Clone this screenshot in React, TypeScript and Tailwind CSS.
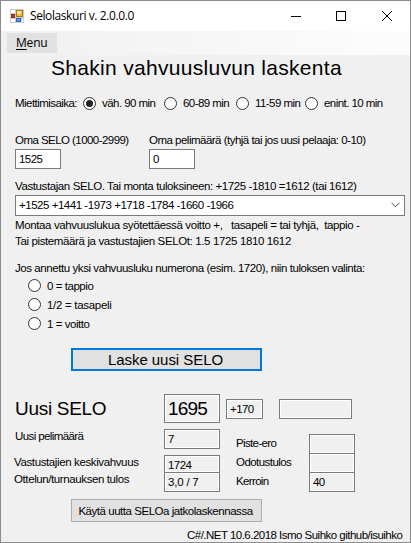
import type { ReactNode } from "react";

function Label({ className = "", children }: { className?: string; children: ReactNode }) {
  return <span className={`block whitespace-pre ${className}`}>{children}</span>;
}

function Radio({ checked = false }: { checked?: boolean }) {
  return (
    <span className="flex h-[13px] w-[13px] shrink-0 items-center justify-center rounded-full border border-[#333] bg-white">
      {checked && <span className="h-[7px] w-[7px] rounded-full bg-[#222]" />}
    </span>
  );
}

function Box({ className = "", children }: { className?: string; children?: ReactNode }) {
  return (
    <div className={`flex shrink-0 items-center whitespace-pre border border-[#7a7a7a] pl-[3px] ${className}`}>
      {children}
    </div>
  );
}

function ReadOnly({ className = "", children }: { className?: string; children?: ReactNode }) {
  return <Box className={`bg-[#f0f0f0] shadow-[inset_0_0_0_1px_#fff] ${className}`}>{children}</Box>;
}

function TitleBar() {
  return (
    <div className="flex h-[30px] shrink-0 items-center bg-white pl-[9px] font-['Open_Sans','Noto_Sans',sans-serif] text-[12px]">
      <svg width="14" height="14" viewBox="0 0 14 14" className="shrink-0">
        <rect width="14" height="14" fill="#c9cdd0" />
        <path d="M1 1h4v3H1zM1 10h4v3H1zM12 10h1v3h-1z" fill="#fff" />
        <rect x="6.5" y="1.5" width="6" height="6" fill="#f6bd32" stroke="#a77a1a" />
        <rect x="7" y="2" width="4" height="3" fill="#ffe9a0" />
        <rect x="1.500" y="5.500" width="3" height="3" fill="#cf3e2d" stroke="#8e251b" />
        <rect x="6.500" y="9.500" width="4" height="3" fill="#5b9bea" stroke="#3569bd" />
      </svg>
      <Label className="ml-[6px] w-[150px] tracking-[-0.41px]">Selolaskuri v. 2.0.0.0</Label>
      <div className="ml-auto flex items-center pr-[17px]">
        <svg width="102" height="12" viewBox="0 0 102 12" fill="none" stroke="#000" shapeRendering="crispEdges">
          <path d="M0 6.5h10" />
          <path d="M45.500 1.500h9v9h-9z" />
          <path d="M91 1l10 10M101 1L91 11" shapeRendering="auto" />
        </svg>
      </div>
    </div>
  );
}

function MenuBar() {
  return (
    <div className="flex h-6 shrink-0 items-start bg-linear-to-r from-[#f0f0f0] to-[#fdfdfd] pl-[6px] pt-[2px]">
      <div className="flex h-5 w-[50px] items-center bg-[#e1e1e1] pl-[9px] font-['Open_Sans','Noto_Sans',sans-serif] text-[12px] tracking-[-0.2px]">
        <span className="underline underline-offset-2">M</span>enu
      </div>
    </div>
  );
}

export default function App() {
  return (
    <div className="flex h-[543px] w-[411px] flex-col overflow-hidden border border-[#8c8c8c] bg-[#f0f0f0] font-['Liberation_Sans',Arial,sans-serif] text-[11.5px] leading-[14px] tracking-[-0.55px] text-black">
      <TitleBar />
      <MenuBar />
      <Label className="ml-[50px] mt-px h-6 text-[21px] leading-6 tracking-[0.3px]">Shakin vahvuusluvun laskenta</Label>

      <div className="ml-[14px] mt-[15px] flex h-4 shrink-0 items-center">
        <Label className="w-[68px]">Miettimisaika:</Label>
        <div className="flex w-[81px] items-center gap-[6px]"><Radio checked /><Label>väh. 90 min</Label></div>
        <div className="flex w-[72px] items-center gap-[6px]"><Radio /><Label>60-89 min</Label></div>
        <div className="flex w-[69px] items-center gap-[6px]"><Radio /><Label>11-59 min</Label></div>
        <div className="flex items-center gap-[6px]"><Radio /><Label>enint. 10 min</Label></div>
      </div>

      <div className="ml-[14px] mt-[22px] flex shrink-0">
        <div className="w-[134px]">
          <Label>Oma SELO (1000-2999)</Label>
          <Box className="mt-[2px] h-5 w-[46px] bg-white">1525</Box>
        </div>
        <div>
          <Label className="tracking-[-0.51px]">Oma pelimäärä (tyhjä tai jos uusi pelaaja: 0-10)</Label>
          <Box className="mt-[2px] h-5 w-[46px] bg-white">0</Box>
        </div>
      </div>

      <div className="ml-[14px] mt-[10px] w-[390px] shrink-0">
        <Label className="tracking-[-0.4px]">Vastustajan SELO. Tai monta tuloksineen: +1725 -1810 =1612 (tai 1612)</Label>
        <Box className="mt-[2px] h-[21px] bg-white pb-px tracking-[-0.47px]">
          +1525 +1441 -1973 +1718 -1784 -1660 -1966
          <svg width="9" height="6" viewBox="0 0 9 6" fill="none" stroke="#444" className="ml-auto mr-[4px]">
            <path d="M0.500 0.800l4 4 4-4" />
          </svg>
        </Box>
        <Label className="mt-[2px] tracking-[-0.38px]">Montaa vahvuuslukua syötettäessä voitto +,   tasapeli = tai tyhjä,  tappio -</Label>
        <Label className="mt-[2px] tracking-[-0.37px]">Tai pistemäärä ja vastustajien SELOt: 1.5 1725 1810 1612</Label>
        <Label className="mt-[13px] tracking-[-0.43px]">Jos annettu yksi vahvuusluku numerona (esim. 1720), niin tuloksen valinta:</Label>
      </div>

      <div className="ml-[27px] mt-px flex shrink-0 flex-col">
        <div className="flex h-[19px] items-center gap-[6px]"><Radio /><Label className="tracking-[-0.45px]">0 = tappio</Label></div>
        <div className="flex h-[19px] items-center gap-[6px]"><Radio /><Label className="tracking-[-0.3px]">1/2 = tasapeli</Label></div>
        <div className="flex h-[19px] items-center gap-[6px]"><Radio /><Label className="tracking-[-0.45px]">1 = voitto</Label></div>
      </div>

      <button className="ml-[70px] mt-[15px] h-[23px] w-[191px] shrink-0 border-2 border-[#0078d7] bg-[#e1e1e1] pr-0.5 pt-px text-[15px] leading-[18px] tracking-[-0.05px]">
        Laske uusi SELO
      </button>

      <div className="ml-[14px] mt-[23px] flex h-[29px] shrink-0 items-center">
        <Label className="w-[149px] text-[19px] leading-6 tracking-[-0.3px]">Uusi SELO</Label>
        <ReadOnly className="h-[29px] w-14 text-[19px] tracking-[-0.8px]">1695</ReadOnly>
        <ReadOnly className="ml-[6px] h-5 w-[37px]">+170</ReadOnly>
        <ReadOnly className="ml-4 h-5 w-[73px]" />
      </div>

      <div className="ml-[13px] mt-[6px] flex h-[63px] shrink-0">
        <div className="w-[150px]">
          <Label className="ml-px tracking-[-0.6px]">Uusi pelimäärä</Label>
          <Label className="mt-[12px] tracking-[-0.38px]">Vastustajien keskivahvuus</Label>
          <Label className="mt-[3px] tracking-[-0.4px]">Ottelun/turnauksen tulos</Label>
        </div>
        <div className="w-[72px]">
          <ReadOnly className="h-5 w-14">7</ReadOnly>
          <ReadOnly className="mt-[6px] h-[18px] w-14 pt-px">1724</ReadOnly>
          <ReadOnly className="-mt-px h-5 w-14 tracking-[-0.2px]">3,0 / 7</ReadOnly>
        </div>
        <div className="w-[73px] pt-[7px]">
          <Label className="tracking-[-0.65px]">Piste-ero</Label>
          <Label className="mt-[5px]">Odotustulos</Label>
          <Label className="mt-[5px] tracking-[-0.65px]">Kerroin</Label>
        </div>
        <div className="pt-[5px]">
          <ReadOnly className="h-5 w-[46px]" />
          <ReadOnly className="-mt-px h-5 w-[46px]" />
          <ReadOnly className="-mt-px h-5 w-[46px]">40</ReadOnly>
        </div>
      </div>

      <button className="ml-[70px] mt-[7px] h-[23px] w-[191px] shrink-0 whitespace-nowrap border border-[#adadad] bg-[#e1e1e1] pr-0.5 tracking-[-0.46px]">
        Käytä uutta SELOa jatkolaskennassa
      </button>
      <Label className="ml-[186px] mt-[6px] tracking-[-0.52px]">C#/.NET 10.6.2018 Ismo Suihko github/isuihko</Label>
    </div>
  );
}
